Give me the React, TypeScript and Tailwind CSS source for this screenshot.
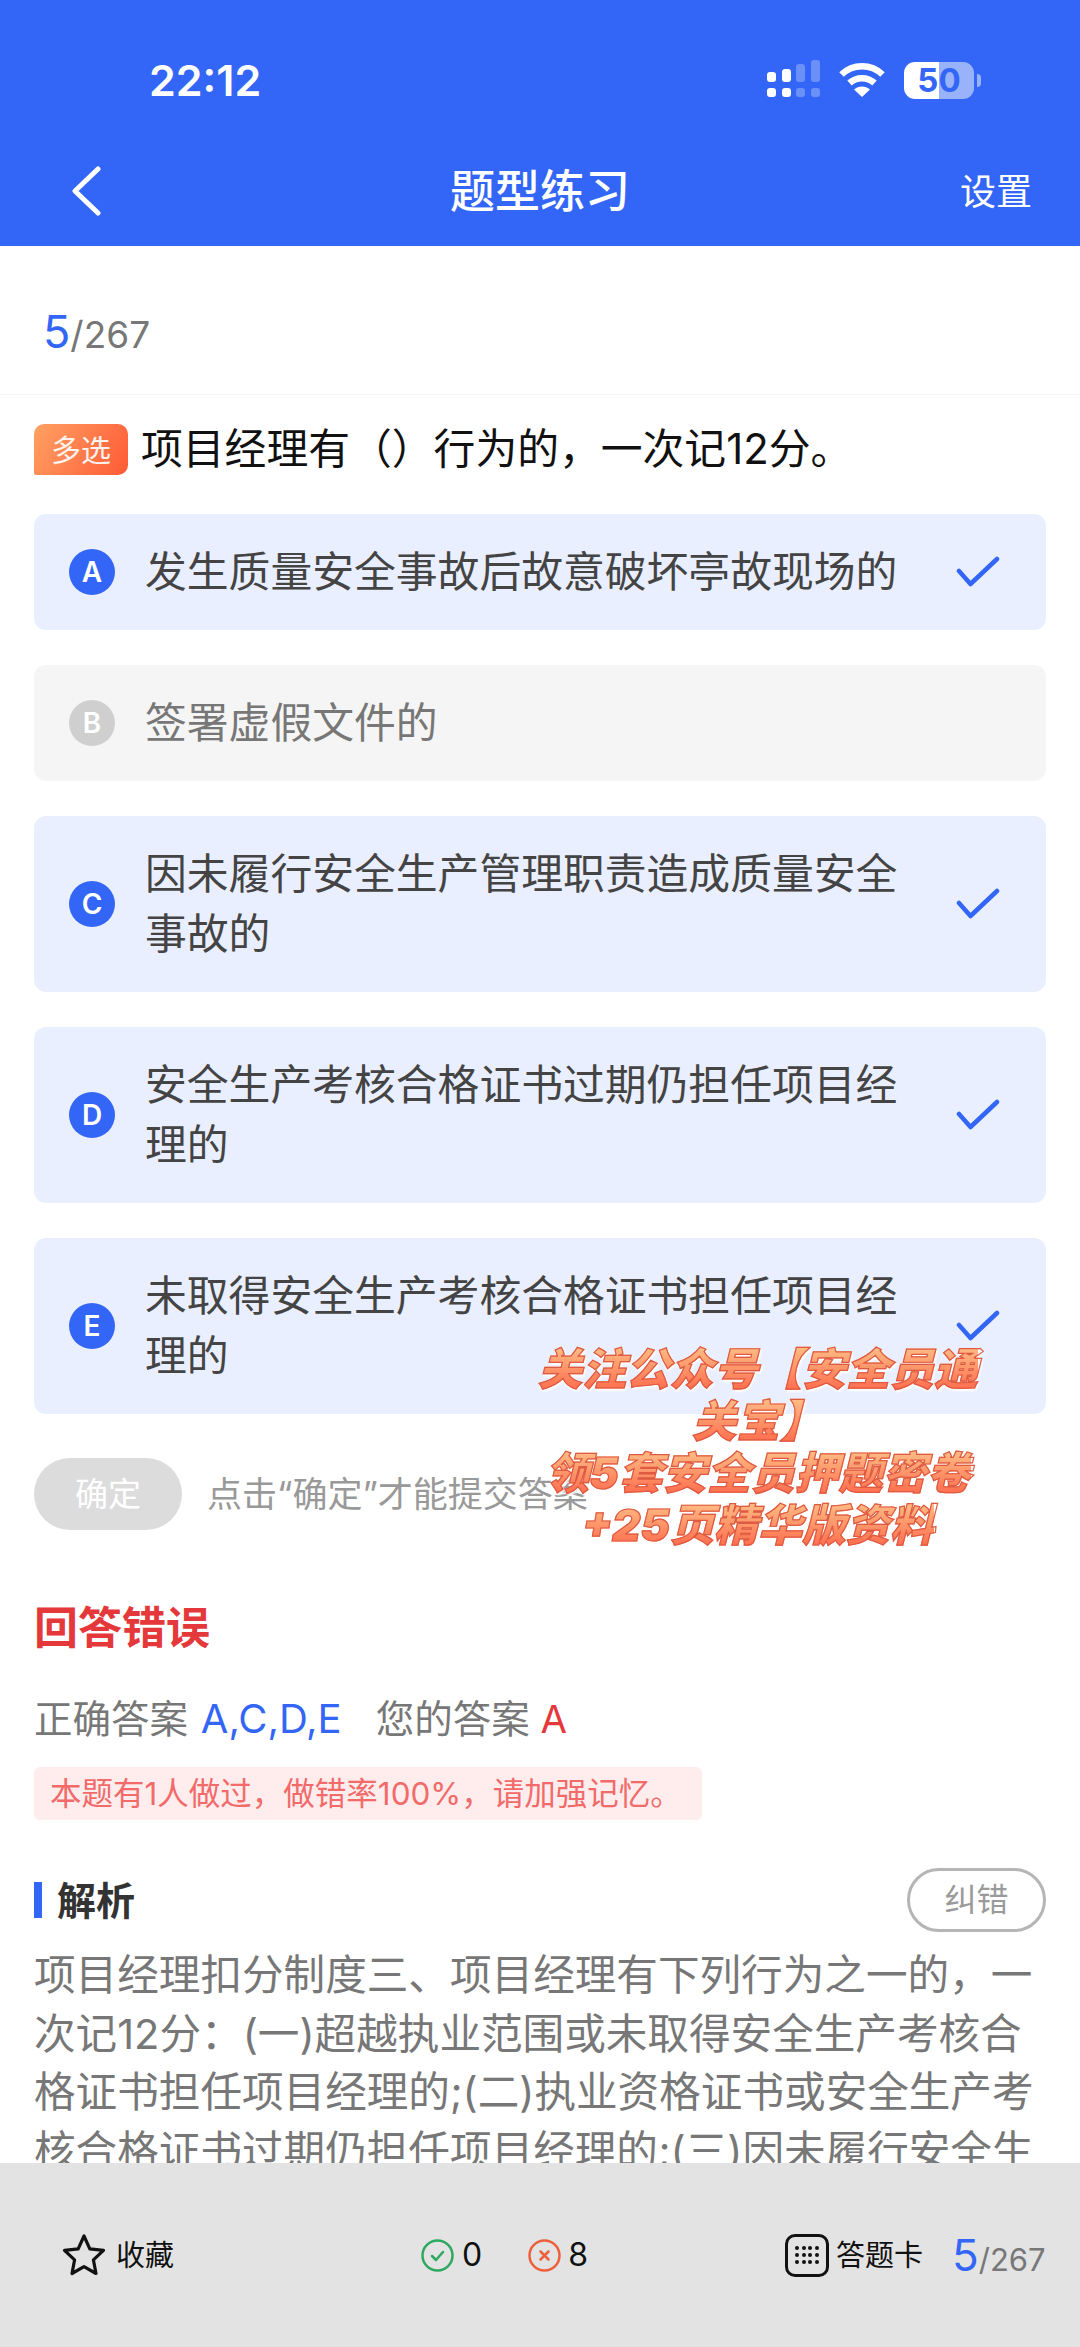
const options = [
  { key: 'A', text: '发生质量安全事故后故意破坏亭故现场的', picked: true },
  { key: 'B', text: '签署虚假文件的', picked: false },
  { key: 'C', text: '因未履行安全生产管理职责造成质量安全事故的', picked: true },
  { key: 'D', text: '安全生产考核合格证书过期仍担任项目经理的', picked: true },
  { key: 'E', text: '未取得安全生产考核合格证书担任项目经理的', picked: true },
];

const promoLines = ['关注公众号【安全员通', '关宝】', '领5套安全员押题密卷', '+25页精华版资料'];

const CellIcon = () => (
  <svg width="56" height="40" viewBox="0 0 56 40" fill="#fff">
    <rect x="0" y="12" width="9" height="10" rx="3" />
    <rect x="15" y="9" width="9" height="13" rx="3" />
    <rect x="29" y="4" width="9" height="18" rx="3" opacity="0.28" />
    <rect x="44" y="0" width="9" height="22" rx="3" opacity="0.28" />
    <rect x="0" y="28" width="9" height="9" rx="3" />
    <rect x="15" y="28" width="9" height="9" rx="3" />
    <rect x="29" y="28" width="9" height="9" rx="3" opacity="0.28" />
    <rect x="44" y="28" width="9" height="9" rx="3" opacity="0.28" />
  </svg>
);

const WifiIcon = () => (
  <svg width="48" height="36" viewBox="0 0 48 36" fill="none" stroke="#fff" strokeWidth="6.5">
    <path d="M3.5 12.5C15 1.5 33 1.5 44.5 12.5" />
    <path d="M11.5 21C18.5 14.5 29.5 14.5 36.5 21" />
    <path d="M24 35L16 27.5C20.5 23.5 27.5 23.5 32 27.5Z" fill="#fff" stroke="none" />
  </svg>
);

const Check = () => (
  <svg width="44" height="32" viewBox="0 0 44 32" fill="none" stroke="#3366f6" strokeWidth="4.5" strokeLinecap="round" strokeLinejoin="round">
    <path d="M3 15L14.5 28L41 3" />
  </svg>
);

const Option = ({ item }: { item: (typeof options)[number] }) => (
  <div
    className={`flex items-center rounded-[12px] py-[28px] pl-[35px] pr-[46px] ${
      item.picked ? 'bg-[#e9effe] text-[#444444]' : 'bg-[#f5f5f5] text-[#777777]'
    }`}
  >
    <span
      className={`flex h-[46px] w-[46px] shrink-0 items-center justify-center rounded-full text-[28px] font-semibold leading-none text-white ${
        item.picked ? 'bg-[#3366f6]' : 'bg-[#cfcfcf]'
      }`}
    >
      {item.key}
    </span>
    <p className="ml-[30px] w-[765px] text-[41.8px] leading-[60px]">{item.text}</p>
    {item.picked && (
      <span className="ml-auto flex shrink-0">
        <Check />
      </span>
    )}
  </div>
);

const Progress = ({ big, small }: { big: string; small: string }) => (
  <span className={`font-['Inter',sans-serif] ${small} text-[#777777]`}>
    <span className={`${big} text-[#3366f6]`}>5</span>/267
  </span>
);

export default function App() {
  return (
    <div className="flex h-[2347px] w-[1080px] flex-col overflow-hidden bg-white font-['Inter','Noto_Sans_CJK_SC',sans-serif]">
      <header className="h-[246px] shrink-0 bg-[#3366f6] text-white">
        <div className="flex h-[160px] items-center">
          <span className="ml-[149px] text-[43px] font-semibold leading-none">22:12</span>
          <div className="ml-auto mr-[99px] flex items-center">
            <CellIcon />
            <span className="ml-[15px] flex">
              <WifiIcon />
            </span>
            <span className="ml-[18px] flex h-[37px] w-[70px] items-center justify-center rounded-[11px] bg-[linear-gradient(90deg,#ffffff_50%,rgba(255,255,255,0.5)_50%)] text-[33px] font-bold leading-none text-[#3366f6]">
              50
            </span>
            <span className="ml-[3px] h-[13px] w-[4px] rounded-r-full bg-white/50" />
          </div>
        </div>
        <div className="relative flex h-[86px] items-center justify-center pb-[24px]">
          <svg className="absolute left-[70px] top-[6px]" width="32" height="50" viewBox="0 0 32 50" fill="none" stroke="#fff" strokeWidth="5" strokeLinecap="round" strokeLinejoin="round">
            <path d="M28 3L5 25L28 47" />
          </svg>
          <h1 className="text-[45px] font-medium leading-none">题型练习</h1>
          <span className="absolute right-[48px] top-[14px] text-[36px] leading-none">设置</span>
        </div>
      </header>

      <main className="flex-1 overflow-hidden">
        <div className="flex h-[149px] items-center border-b border-[#f5f5f5] pl-[43px] pt-[22px] leading-none">
          <Progress big="text-[45px]" small="text-[37px]" />
        </div>

        <div className="relative px-[34px]">
          <div className="mt-[29px] flex items-center">
            <span className="flex h-[51px] w-[94px] items-center justify-center rounded-[10px] rounded-bl-[2px] bg-[linear-gradient(120deg,#ffa163,#ff5a36)] text-[30px] leading-none text-white/90">
              多选
            </span>
            <p className="ml-[13px] text-[41.8px] leading-[51px] text-[#111111]">项目经理有（）行为的，一次记12分。</p>
          </div>

          <div className="mt-[39px] flex flex-col gap-[35px]">
            {options.map((item) => (
              <Option key={item.key} item={item} />
            ))}
          </div>

          <div className="mt-[44px] flex items-center">
            <span className="flex h-[72px] w-[148px] items-center justify-center rounded-[36px] bg-[#dcdcdc] text-[33px] leading-none text-white">
              确定
            </span>
            <span className="ml-[25px] text-[35px] leading-none text-[#999999]">点击“确定”才能提交答案</span>
          </div>

          <div className="absolute left-[510px] top-[919px] w-[496px] text-center text-[44px] font-black italic leading-[52px]">
            {promoLines.map((line) => (
              <div key={line} className="flex justify-center">
                <span className="bg-[linear-gradient(180deg,#ffc48a,#ff6448)] bg-clip-text text-transparent drop-shadow-[1px_2px_1px_#ffffff] [-webkit-text-stroke:1.2px_#de5a42]">
                  {line}
                </span>
              </div>
            ))}
          </div>

          <h2 className="mt-[68px] text-[44px] font-bold leading-[60px] text-[#e5383b]">回答错误</h2>

          <p className="mt-[33px] text-[38.5px] leading-[56px] text-[#777777]">
            正确答案 <span className="ml-[2px] text-[40px] text-[#3366f6]">A,C,D,E</span>
            <span className="ml-[34px]">您的答案</span> <span className="text-[#e5383b]">A</span>
          </p>

          <div className="mt-[20px] flex h-[53px] w-[668px] items-center rounded-[6px] bg-[#ffeded] pl-[16px] text-[31.5px] leading-none text-[#f26a6a]">
            本题有1人做过，做错率100%，请加强记忆。
          </div>

          <div className="mt-[48px] flex h-[64px] items-center justify-between">
            <div className="flex items-center">
              <span className="h-[36px] w-[8px] bg-[#3366f6]" />
              <h3 className="ml-[15px] text-[39px] font-bold leading-none text-[#333333]">解析</h3>
            </div>
            <span className="flex h-[64px] w-[139px] items-center justify-center rounded-[32px] border-[3px] border-[#b5b5b5] text-[32px] leading-none text-[#9a9a9a]">
              纠错
            </span>
          </div>

          <p className="mt-[14px] text-[41.6px] leading-[58.5px] text-[#777777]">
            项目经理扣分制度三、项目经理有下列行为之一的，一次记12分：(一)超越执业范围或未取得安全生产考核合格证书担任项目经理的;(二)执业资格证书或安全生产考核合格证书过期仍担任项目经理的;(三)因未履行安全生产管理职责造成质量安全事故的;
          </p>
        </div>
      </main>

      <footer className="flex h-[184px] shrink-0 items-center bg-[#e3e3e3] text-[#111111]">
        <div className="ml-[62px] flex items-center">
          <svg width="44" height="44" viewBox="0 0 44 44" fill="none" stroke="#111" strokeWidth="3.2" strokeLinejoin="round">
            <path d="M22 3L27.8 15.8L41.5 17.4L31.4 26.8L34 40.5L22 33.6L10 40.5L12.6 26.8L2.5 17.4L16.2 15.8Z" />
          </svg>
          <span className="ml-[10px] text-[29px] leading-none">收藏</span>
        </div>

        <div className="ml-[247px] flex items-center">
          <svg width="33" height="33" viewBox="0 0 33 33" fill="none" stroke="#2fa85f" strokeWidth="2.5" strokeLinecap="round" strokeLinejoin="round">
            <circle cx="16.5" cy="16.5" r="15" />
            <path d="M11 17L15 21L22 13" />
          </svg>
          <span className="ml-[8px] text-[32px] leading-none">0</span>
          <svg className="ml-[46px]" width="33" height="33" viewBox="0 0 33 33" fill="none" stroke="#ee5f3c" strokeWidth="2.5" strokeLinecap="round">
            <circle cx="16.5" cy="16.5" r="15" />
            <path d="M12.5 12.5L20.5 20.5M20.5 12.5L12.5 20.5" />
          </svg>
          <span className="ml-[7px] text-[32px] leading-none">8</span>
        </div>

        <div className="ml-[197px] flex items-center">
          <span className="grid h-[43px] w-[44px] grid-cols-4 place-items-center rounded-[10px] border-[3.5px] border-[#111111] px-[6px] py-[8px]">
            {Array.from({ length: 12 }).map((_, i) => (
              <span key={i} className="h-[4px] w-[4px] rounded-full bg-[#111111]" />
            ))}
          </span>
          <span className="ml-[7px] text-[29px] leading-none">答题卡</span>
          <span className="ml-[29px] leading-none">
            <Progress big="text-[44px]" small="text-[31px]" />
          </span>
        </div>
      </footer>
    </div>
  );
}
